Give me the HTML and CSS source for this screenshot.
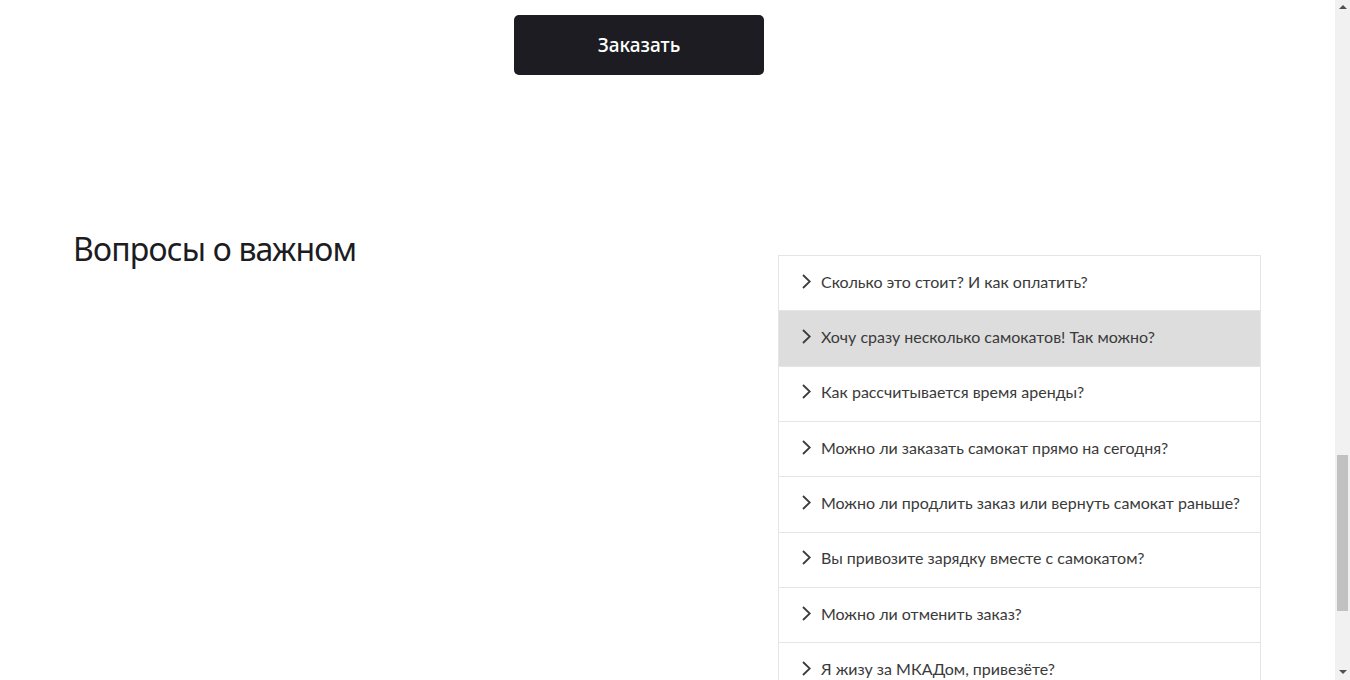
FILE: index.html
```html
<!DOCTYPE html>
<html lang="ru">
<head>
<meta charset="utf-8">
<link rel="stylesheet" href="styles.css">
</head>
<body>
<div class="viewport">
  <main class="page">
    <div class="order-row">
      <button class="order-btn">Заказать</button>
    </div>
    <section class="faq">
      <h2 class="faq-title">Вопросы о важном</h2>
      <ul class="faq-list">
        <li class="faq-item"><svg class="chev" viewBox="0 0 9 15"><path d="M1 1 7.8 7.5 1 14"/></svg><span>Сколько это стоит? И как оплатить?</span></li>
        <li class="faq-item is-hover"><svg class="chev" viewBox="0 0 9 15"><path d="M1 1 7.8 7.5 1 14"/></svg><span>Хочу сразу несколько самокатов! Так можно?</span></li>
        <li class="faq-item"><svg class="chev" viewBox="0 0 9 15"><path d="M1 1 7.8 7.5 1 14"/></svg><span>Как рассчитывается время аренды?</span></li>
        <li class="faq-item"><svg class="chev" viewBox="0 0 9 15"><path d="M1 1 7.8 7.5 1 14"/></svg><span>Можно ли заказать самокат прямо на сегодня?</span></li>
        <li class="faq-item"><svg class="chev" viewBox="0 0 9 15"><path d="M1 1 7.8 7.5 1 14"/></svg><span>Можно ли продлить заказ или вернуть самокат раньше?</span></li>
        <li class="faq-item"><svg class="chev" viewBox="0 0 9 15"><path d="M1 1 7.8 7.5 1 14"/></svg><span>Вы привозите зарядку вместе с самокатом?</span></li>
        <li class="faq-item"><svg class="chev" viewBox="0 0 9 15"><path d="M1 1 7.8 7.5 1 14"/></svg><span>Можно ли отменить заказ?</span></li>
        <li class="faq-item"><svg class="chev" viewBox="0 0 9 15"><path d="M1 1 7.8 7.5 1 14"/></svg><span>Я жизу за МКАДом, привезёте?</span></li>
      </ul>
    </section>
  </main>
  <div class="scrollbar">
    <div class="sb-arrow sb-up"></div>
    <div class="sb-track"><div class="sb-thumb"></div></div>
    <div class="sb-arrow sb-down"></div>
  </div>
</div>
</body>
</html>
```
FILE: styles.css
```css
* { box-sizing: border-box; }
html, body { margin: 0; padding: 0; height: 680px; overflow: hidden; background: #fff; }
body { font-family: "Noto Sans", "Liberation Sans", sans-serif; color: #1c1c22; }
.viewport { display: flex; width: 1350px; height: 680px; }
.page { width: 1335px; height: 680px; overflow: hidden; }
.order-row { padding-top: 15px; padding-left: 514px; }
.order-btn {
  width: 250px; height: 60px; border: 0; border-radius: 5px;
  background: #1c1c22; color: #fff;
  font-family: "Noto Sans", sans-serif; font-size: 19px; font-weight: 500;
  display: flex; align-items: center; justify-content: center; padding: 0;
}
.faq { display: flex; padding: 180px 74px 0 73px; justify-content: space-between; align-items: flex-start; }
.faq-title { margin: -26px 0 0; font-size: 32px; font-weight: 400; line-height: 40px; letter-spacing: -0.8px; color: #1c1c22; }
.faq-list { list-style: none; margin: 0; padding: 0; width: 483px; border: 1px solid #e5e5e5; border-bottom: 0; }
.faq-item {
  display: flex; align-items: center; height: 55.33px;
  padding: 0 0 4px 23px; border-bottom: 1px solid #e5e5e5;
  font-family: "Lato", "Noto Sans", sans-serif; font-size: 16px; color: #3a3a3a;
}
.faq-item.is-hover { background: #dddddd; }
.chev { width: 9px; height: 15px; margin-right: 10px; flex: none; }
.chev path { fill: none; stroke: #3a3a3a; stroke-width: 1.8; }
.scrollbar { width: 15px; height: 680px; background: #f1f1f1; display: flex; flex-direction: column; align-items: center; }
.sb-arrow { width: 0; height: 0; border-left: 4px solid transparent; border-right: 4px solid transparent; }
.sb-up { border-bottom: 4px solid #505050; margin: 5px 0 6px; }
.sb-down { border-top: 4px solid #505050; margin: 6px 0 6px; }
.sb-track { flex: 1; width: 100%; padding: 0 2px; }
.sb-thumb { margin-top: 440px; height: 156px; background: #c1c1c1; }
```
